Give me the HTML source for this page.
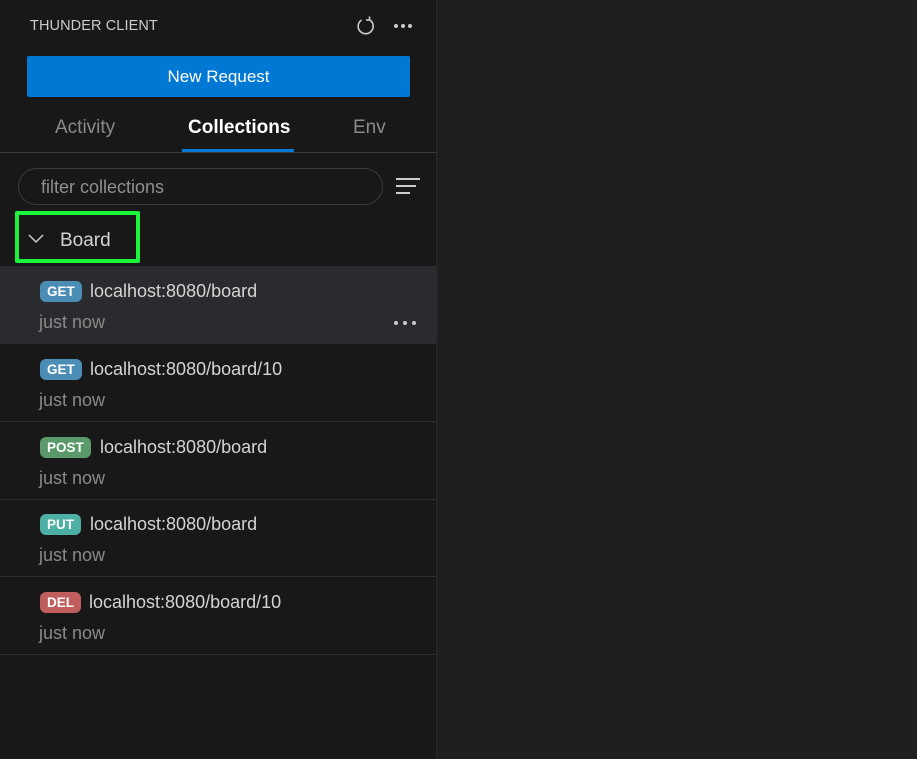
<!DOCTYPE html>
<html><head><meta charset="utf-8"><style>
*{margin:0;padding:0;box-sizing:border-box}
body{width:917px;height:759px;background:#1f1f1f;font-family:"Liberation Sans",sans-serif;position:relative;overflow:hidden}
#side{position:absolute;left:0;top:0;width:437px;height:759px;background:#181818;border-right:1px solid #2b2b2b}
.a{position:absolute}
.title{left:30px;top:18px;font-size:14.5px;color:#cccccc;letter-spacing:0.1px}
.btn{left:27px;top:56px;width:383px;height:41px;background:#0078d4;border-radius:2px;color:#fff;font-size:17px;text-align:center;line-height:42px}
.tab{top:117px;font-size:19px;color:#8b8b8b}
.tabline{top:152px;left:0;width:437px;height:1px;background:#3a3a3a}
.ul{left:182px;top:149px;width:112px;height:3px;background:#0078d4}
.filter{left:18px;top:168px;width:365px;height:37px;border:1px solid #3c3c3c;border-radius:19px;color:#8f8f8f;font-size:18px;padding-left:22px;line-height:37px}
.green{left:15px;top:211px;width:125px;height:52px;border:4px solid #1cf43c;border-radius:2px}
.row{left:0;width:436px;height:78px;border-bottom:1px solid #2e2e2e}
.badge{position:absolute;left:40px;top:15px;height:21px;border-radius:6px;color:#fff;font-weight:bold;font-size:13.5px;line-height:21px;padding:0 7px}
.url{position:absolute;top:15px;font-size:18px;color:#d4d4d4}
.time{position:absolute;left:39px;top:46px;font-size:18px;color:#8a8a8a}
</style></head><body>
<div id="side">
<div class="a title">THUNDER CLIENT</div>
<svg class="a" style="left:355px;top:15px" width="22" height="22" viewBox="0 0 22 22"><path d="M14 4.5A7.5 7.5 0 1 1 6.5 5" fill="none" stroke="#ccc" stroke-width="1.6"/><path d="M14.5 1.5v3.5h-3.5" fill="none" stroke="#ccc" stroke-width="1.6"/></svg>
<div class="a" style="left:394px;top:24px;width:4px;height:4px;border-radius:2px;background:#ccc;box-shadow:7px 0 #ccc,14px 0 #ccc"></div>
<div class="a btn">New Request</div>
<div class="a tab" style="left:55px">Activity</div>
<div class="a tab" style="left:188px;color:#fff;font-weight:bold">Collections</div>
<div class="a tab" style="left:353px">Env</div>
<div class="a tabline"></div>
<div class="a ul"></div>
<div class="a filter">filter collections</div>
<div class="a" style="left:396px;top:178px;width:24px;height:2px;background:#ccc"></div>
<div class="a" style="left:396px;top:185px;width:20px;height:2px;background:#ccc"></div>
<div class="a" style="left:396px;top:192px;width:14px;height:2px;background:#ccc"></div>
<div class="a green"></div>
<svg class="a" style="left:28px;top:233px" width="16" height="12" viewBox="0 0 16 12"><path d="M1 2l7 7 7-7" fill="none" stroke="#ccc" stroke-width="1.5"/></svg>
<div class="a" style="left:60px;top:230px;font-size:19px;color:#d4d4d4">Board</div>

<div class="a row" style="top:266px;background:#2a2b2e"><span class="badge" style="background:#4b8db5">GET</span><span class="url" style="left:90px">localhost:8080/board</span><span class="time">just now</span>
<div class="a" style="left:394px;top:55px;width:4px;height:4px;border-radius:2px;background:#ccc;box-shadow:9px 0 #ccc,18px 0 #ccc"></div></div>
<div class="a row" style="top:344px"><span class="badge" style="background:#4b8db5">GET</span><span class="url" style="left:90px">localhost:8080/board/10</span><span class="time">just now</span></div>
<div class="a row" style="top:422px"><span class="badge" style="background:#5a9a6a">POST</span><span class="url" style="left:100px">localhost:8080/board</span><span class="time">just now</span></div>
<div class="a row" style="top:499px"><span class="badge" style="background:#4cb0a4">PUT</span><span class="url" style="left:90px">localhost:8080/board</span><span class="time">just now</span></div>
<div class="a row" style="top:577px"><span class="badge" style="background:#c05e5e">DEL</span><span class="url" style="left:89px">localhost:8080/board/10</span><span class="time">just now</span></div>
</div>
</body></html>
